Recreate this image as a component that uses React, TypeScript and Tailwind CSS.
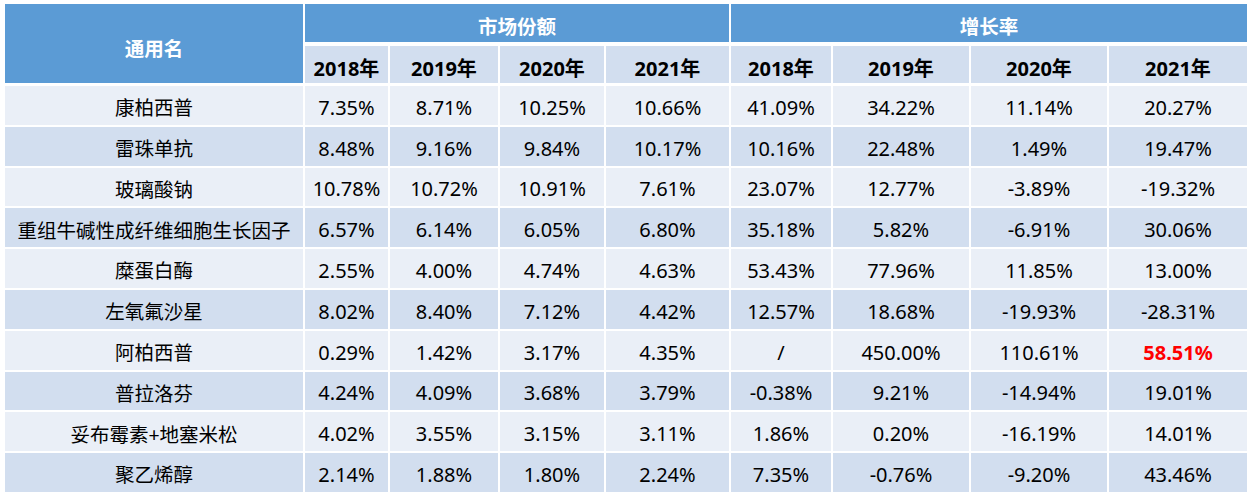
const years = ["2018年", "2019年", "2020年", "2021年"]

type Row = {
  name: string
  share: string[]
  growth: string[]
  highlight?: number
}

const rows: Row[] = [
  { name: "康柏西普", share: ["7.35%", "8.71%", "10.25%", "10.66%"], growth: ["41.09%", "34.22%", "11.14%", "20.27%"] },
  { name: "雷珠单抗", share: ["8.48%", "9.16%", "9.84%", "10.17%"], growth: ["10.16%", "22.48%", "1.49%", "19.47%"] },
  { name: "玻璃酸钠", share: ["10.78%", "10.72%", "10.91%", "7.61%"], growth: ["23.07%", "12.77%", "-3.89%", "-19.32%"] },
  { name: "重组牛碱性成纤维细胞生长因子", share: ["6.57%", "6.14%", "6.05%", "6.80%"], growth: ["35.18%", "5.82%", "-6.91%", "30.06%"] },
  { name: "糜蛋白酶", share: ["2.55%", "4.00%", "4.74%", "4.63%"], growth: ["53.43%", "77.96%", "11.85%", "13.00%"] },
  { name: "左氧氟沙星", share: ["8.02%", "8.40%", "7.12%", "4.42%"], growth: ["12.57%", "18.68%", "-19.93%", "-28.31%"] },
  { name: "阿柏西普", share: ["0.29%", "1.42%", "3.17%", "4.35%"], growth: ["/", "450.00%", "110.61%", "58.51%"], highlight: 3 },
  { name: "普拉洛芬", share: ["4.24%", "4.09%", "3.68%", "3.79%"], growth: ["-0.38%", "9.21%", "-14.94%", "19.01%"] },
  { name: "妥布霉素+地塞米松", share: ["4.02%", "3.55%", "3.15%", "3.11%"], growth: ["1.86%", "0.20%", "-16.19%", "14.01%"] },
  { name: "聚乙烯醇", share: ["2.14%", "1.88%", "1.80%", "2.24%"], growth: ["7.35%", "-0.76%", "-9.20%", "43.46%"] },
]

const cols = "grid-cols-[298px_83px_108px_104px_123px_100px_136px_136px_138px]"

export default function App() {
  return (
    <div
      className="min-h-screen bg-white pl-[5px] pt-[4px] text-[20px] text-black"
      style={{ fontFamily: '"Noto Sans", "Noto Sans CJK SC", sans-serif' }}
    >
      <div className="w-[1242px]">
        {/* header */}
        <div className={`grid ${cols} grid-rows-[38px_37px] gap-x-[2px] gap-y-[4px]`}>
          <div className="row-span-2 flex items-center justify-center bg-[#5b9bd5] pt-[10px] text-[19.5px] font-bold text-white">
            通用名
          </div>
          <div className="col-span-4 flex items-center justify-center bg-[#5b9bd5] pt-[8px] text-[19.5px] font-bold text-white">
            市场份额
          </div>
          <div className="col-span-4 flex items-center justify-center bg-[#5b9bd5] pt-[8px] text-[19.5px] font-bold text-white">
            增长率
          </div>
          {[...years, ...years].map((y, i) => (
            <div key={i} className="flex items-center justify-center bg-[#d2deef] pt-[8px] font-bold">
              {y}
            </div>
          ))}
        </div>

        {/* body */}
        <div className="mt-[3px] flex flex-col gap-[2px]">
          {rows.map((r, i) => (
            <div
              key={r.name}
              className={`grid ${cols} h-[38.8px] gap-x-[2px] ${i % 2 === 0 ? "bg-[#eaeff7]" : "bg-[#d2deef]"}`}
            >
              <div className="flex items-center justify-center pt-[5px] text-[19.5px]">{r.name}</div>
              {r.share.map((v, j) => (
                <div key={j} className="-ml-[2px] flex items-center justify-center border-l-2 border-white pt-[5px]">
                  {v}
                </div>
              ))}
              {r.growth.map((v, j) => (
                <div
                  key={j}
                  className={`-ml-[2px] flex items-center justify-center border-l-2 border-white pt-[5px] ${
                    r.highlight === j ? "font-bold text-[#ff0000]" : ""
                  }`}
                >
                  {v}
                </div>
              ))}
            </div>
          ))}
        </div>
      </div>
    </div>
  )
}
